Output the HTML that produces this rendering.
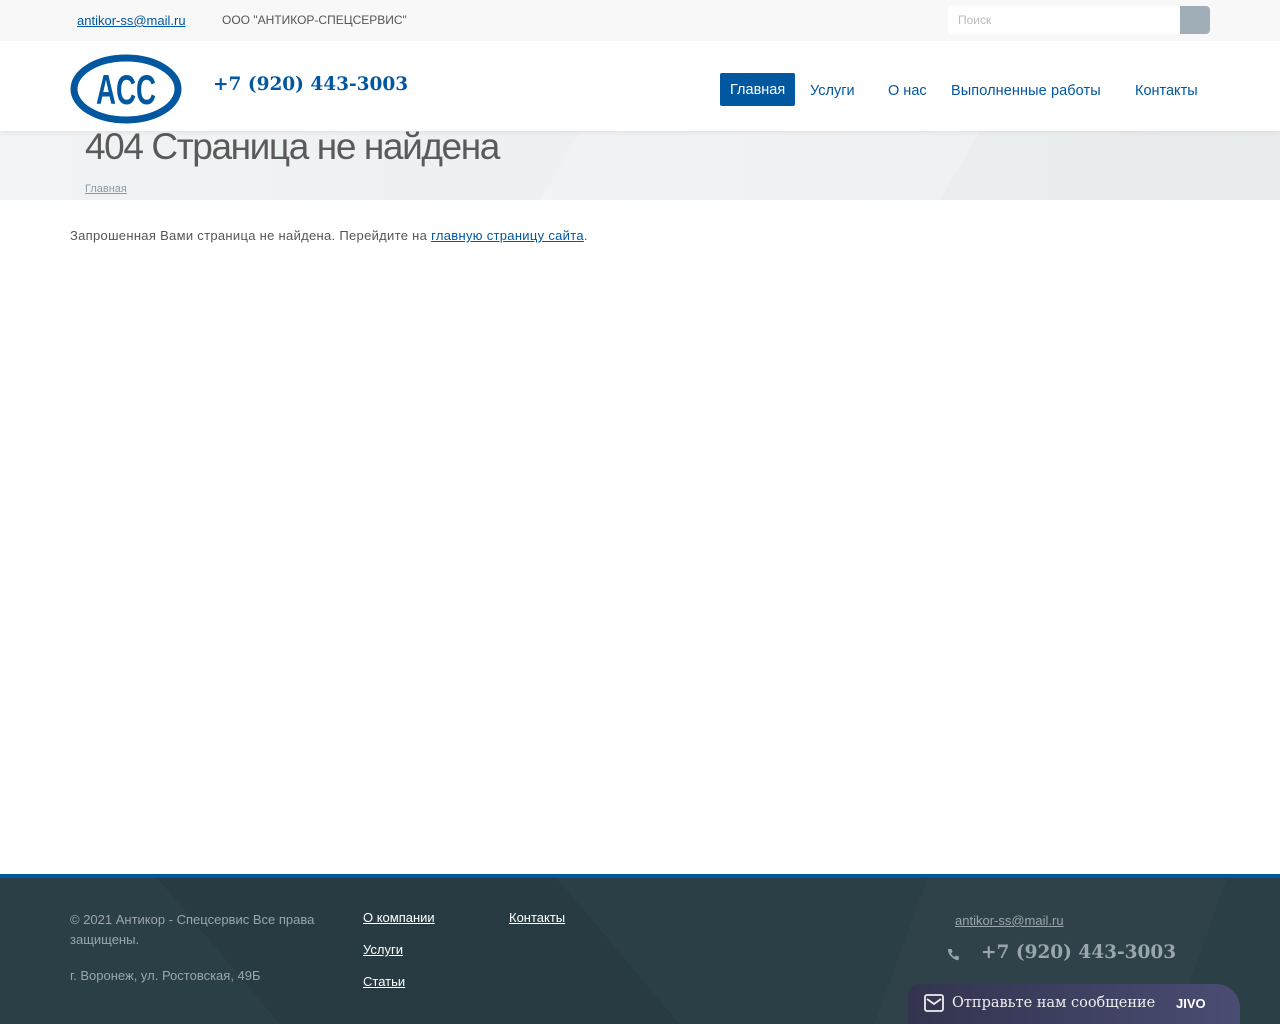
<!DOCTYPE html>
<html><head><meta charset="utf-8">
<style>
*{margin:0;padding:0;box-sizing:border-box}
body{width:1280px;height:1024px;overflow:hidden;font-family:"Liberation Sans",sans-serif;background:#fff;position:relative;color:#555}
a{color:#0157a0}
.top{position:absolute;left:0;top:0;width:1280px;height:41px;background:#f8f8f8}
.top .mail{position:absolute;left:77px;top:13px;font-size:13px;color:#0157a0}
.top .org{position:absolute;left:222px;top:13px;font-size:12px;color:#555}
.search{position:absolute;left:948px;top:6px;width:262px;height:28px;background:#fff;border-radius:4px}
.search span{position:absolute;left:10px;top:7px;font-size:12px;color:#bbb}
.search b{position:absolute;right:0;top:0;width:30px;height:28px;background:#a0aeb7;border-radius:0 4px 4px 0}
.hdr{position:absolute;left:0;top:41px;width:1280px;height:90px;background:#fff;box-shadow:0 2px 4px rgba(0,0,0,.06);z-index:2}
.logo{position:absolute;left:70px;top:13px}
.phone{position:absolute;left:213px;top:33px;font-family:"DejaVu Serif",serif;font-weight:bold;font-size:18.5px;color:#0157a0}
.nav{position:absolute;top:32px;font-size:14.5px;color:#0157a0}
.nav.act{background:#0157a0;color:#fff;padding:9px 10px 8px;top:32px;border-radius:2px}
.band{position:absolute;left:0;top:131px;width:1280px;height:69px;background:linear-gradient(90deg,#f1f3f4,#e9ecee);overflow:hidden}
.band h1{position:absolute;left:85px;top:-5px;font-size:37px;color:#5a5a5a;letter-spacing:-1.4px;font-family:"Liberation Sans",sans-serif;font-weight:normal}
.band a{position:absolute;left:85px;top:52px;font-size:11px;color:#8a9aa6}
.msg{position:absolute;left:70px;top:228px;font-size:13px;color:#555;letter-spacing:.3px}
.foot{position:absolute;left:0;top:874px;width:1280px;height:150px;background:#2b3f47;border-top:4px solid #0157a0;overflow:hidden}
.foot .t{position:absolute;font-size:13px;color:#9aa6ab;line-height:20px}
.foot .l{position:absolute;font-size:13px;color:#fff;text-decoration:underline}
.jivo{position:absolute;left:908px;top:984px;width:332px;height:40px;background:linear-gradient(90deg,#33344f,#4a4c72);border-radius:10px 24px 0 0;color:#eee;font-family:"DejaVu Serif",serif;font-size:14.5px}
</style></head><body>
<div class="top">
<a class="mail" href="#">antikor-ss@mail.ru</a>
<span class="org">ООО "АНТИКОР-СПЕЦСЕРВИС"</span>
<div class="search"><span>Поиск</span><b></b></div>
</div>
<div class="hdr">
<svg class="logo" width="112" height="70" viewBox="0 0 112 70"><ellipse cx="56" cy="35" rx="52" ry="31" fill="none" stroke="#0157a0" stroke-width="7"/><text x="56" y="50" text-anchor="middle" font-family="Liberation Sans,sans-serif" font-weight="bold" font-size="42" fill="#0157a0" textLength="60" lengthAdjust="spacingAndGlyphs">ACC</text></svg>
<div class="phone">+7 (920) 443-3003</div>
<span class="nav act" style="left:720px">Главная</span>
<span class="nav" style="left:810px;top:42px">Услуги</span>
<span class="nav" style="left:888px;top:42px">О нас</span>
<span class="nav" style="left:951px;top:42px;letter-spacing:.1px">Выполненные работы</span>
<span class="nav" style="left:1135px;top:42px">Контакты</span>
</div>
<div class="band">
<div style="position:absolute;left:560px;top:0;width:400px;height:69px;background:rgba(255,255,255,.2);transform:skewX(-30deg)"></div>
<h1>404 Страница не найдена</h1>
<a href="#">Главная</a>
</div>
<div class="msg">Запрошенная Вами страница не найдена. Перейдите на <a href="#">главную страницу сайта</a>.</div>
<div class="foot">
<div style="position:absolute;left:220px;top:0;width:400px;height:150px;background:rgba(0,0,0,.05);transform:skewX(40deg)"></div>
<div style="position:absolute;left:900px;top:0;width:300px;height:150px;background:rgba(255,255,255,.02);transform:skewX(-20deg)"></div>
<div class="t" style="left:70px;top:32px;width:270px">© 2021 Антикор - Спецсервис Все права защищены.</div>
<div class="t" style="left:70px;top:88px">г. Воронеж, ул. Ростовская, 49Б</div>
<a class="l" style="left:363px;top:32px" href="#">О компании</a>
<a class="l" style="left:363px;top:64px" href="#">Услуги</a>
<a class="l" style="left:363px;top:96px" href="#">Статьи</a>
<a class="l" style="left:509px;top:32px" href="#">Контакты</a>
<a class="l" style="left:955px;top:35px;color:#9aa6ab" href="#">antikor-ss@mail.ru</a>
<svg style="position:absolute;left:947px;top:70px" width="12" height="13" viewBox="0 0 12 13"><path d="M2 1l2.5 0 1 3-1.500 1.200c.8 1.800 2 3 3.600 3.800L8.800 7.500l3 1v2.500C11.800 12 10.500 12.500 9.500 12 5 10 2 7 1 3 .8 2 1 1 2 1z" fill="#9aa6ab"/></svg>
<div style="position:absolute;left:981px;top:64px;font-family:'DejaVu Serif',serif;font-weight:bold;font-size:18.5px;color:#9aa6ab">+7 (920) 443-3003</div>
</div>
<div class="jivo">
<svg style="position:absolute;left:16px;top:10px" width="20" height="18" viewBox="0 0 20 18"><rect x="1" y="1" width="18" height="16" rx="2" fill="none" stroke="#eee" stroke-width="1.8"/><path d="M3 5l7 5 7-5" fill="none" stroke="#eee" stroke-width="1.8"/></svg>
<span style="position:absolute;left:44px;top:11px">Отправьте нам сообщение</span>
<span style="position:absolute;left:268px;top:12px;font-family:'Liberation Sans',sans-serif;font-weight:bold;font-size:13px;color:#fff">JIVO</span>
</div>
</body></html>
